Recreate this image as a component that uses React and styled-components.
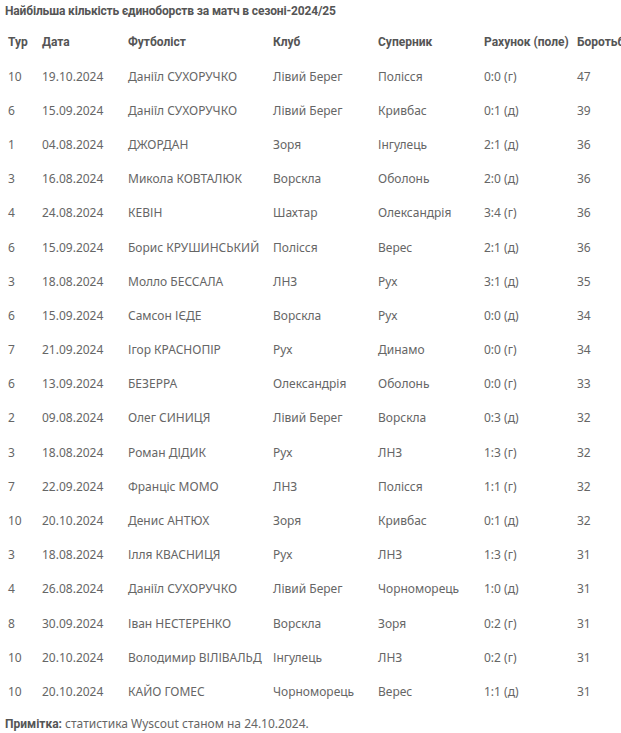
import React from 'react';
import styled, { createGlobalStyle } from 'styled-components';

const GlobalStyle = createGlobalStyle`
    body {
        margin: 0;
        background: #fff;
        overflow: hidden;
        font-family: "Noto Sans", "Open Sans", sans-serif;
    }
`;

const rows = [
    ['10', '19.10.2024', 'Даніїл СУХОРУЧКО', 'Лівий Берег', 'Полісся', '0:0 (г)', '47'],
    ['6', '15.09.2024', 'Даніїл СУХОРУЧКО', 'Лівий Берег', 'Кривбас', '0:1 (д)', '39'],
    ['1', '04.08.2024', 'ДЖОРДАН', 'Зоря', 'Інгулець', '2:1 (д)', '36'],
    ['3', '16.08.2024', 'Микола КОВТАЛЮК', 'Ворскла', 'Оболонь', '2:0 (д)', '36'],
    ['4', '24.08.2024', 'КЕВІН', 'Шахтар', 'Олександрія', '3:4 (г)', '36'],
    ['6', '15.09.2024', 'Борис КРУШИНСЬКИЙ', 'Полісся', 'Верес', '2:1 (д)', '36'],
    ['3', '18.08.2024', 'Молло БЕССАЛА', 'ЛНЗ', 'Рух', '3:1 (д)', '35'],
    ['6', '15.09.2024', 'Самсон ІЄДЕ', 'Ворскла', 'Рух', '0:0 (д)', '34'],
    ['7', '21.09.2024', 'Ігор КРАСНОПІР', 'Рух', 'Динамо', '0:0 (г)', '34'],
    ['6', '13.09.2024', 'БЕЗЕРРА', 'Олександрія', 'Оболонь', '0:0 (г)', '33'],
    ['2', '09.08.2024', 'Олег СИНИЦЯ', 'Лівий Берег', 'Ворскла', '0:3 (д)', '32'],
    ['3', '18.08.2024', 'Роман ДІДИК', 'Рух', 'ЛНЗ', '1:3 (г)', '32'],
    ['7', '22.09.2024', 'Франціс МОМО', 'ЛНЗ', 'Полісся', '1:1 (г)', '32'],
    ['10', '20.10.2024', 'Денис АНТЮХ', 'Зоря', 'Кривбас', '0:1 (д)', '32'],
    ['3', '18.08.2024', 'Ілля КВАСНИЦЯ', 'Рух', 'ЛНЗ', '1:3 (г)', '31'],
    ['4', '26.08.2024', 'Даніїл СУХОРУЧКО', 'Лівий Берег', 'Чорноморець', '1:0 (д)', '31'],
    ['8', '30.09.2024', 'Іван НЕСТЕРЕНКО', 'Ворскла', 'Зоря', '0:2 (г)', '31'],
    ['10', '20.10.2024', 'Володимир ВІЛІВАЛЬД', 'Інгулець', 'ЛНЗ', '0:2 (г)', '31'],
    ['10', '20.10.2024', 'КАЙО ГОМЕС', 'Чорноморець', 'Верес', '1:1 (д)', '31'],
];

const columns = [
    { title: 'Тур', width: 34 },
    { title: 'Дата', width: 86 },
    { title: 'Футболіст', width: 145 },
    { title: 'Клуб', width: 105 },
    { title: 'Суперник', width: 106 },
    { title: 'Рахунок (поле)', width: 93 },
    { title: 'Боротьба', width: 80 },
];

const App = () => (
    <Page>
        <GlobalStyle />
        <Title>Найбільша кількість єдиноборств за матч в сезоні-2024/25</Title>
        <StatsTable>
            <colgroup>
                {columns.map((c) => (
                    <col key={c.title} style={{ width: c.width }} />
                ))}
            </colgroup>
            <thead>
                <tr>
                    {columns.map((c) => (
                        <HeadCell key={c.title}>{c.title}</HeadCell>
                    ))}
                </tr>
            </thead>
            <tbody>
                {rows.map((r, i) => (
                    <tr key={i}>
                        {r.map((v, j) => (
                            <Cell key={j}>{v}</Cell>
                        ))}
                    </tr>
                ))}
            </tbody>
        </StatsTable>
        <Note>
            <strong>Примітка:</strong> статистика Wyscout станом на 24.10.2024.
        </Note>
    </Page>
);

// bold text in the original is a narrow face, Roboto Bold is closest
const boldFont = `"Roboto", "Noto Sans", sans-serif`;

const Page = styled.div`
    width: 700px;
    padding: 3px 5px;
    color: #666;
    font-size: 12px;
`;

const Title = styled.div`
    font-family: ${boldFont};
    font-weight: bold;
    font-size: 12px;
    letter-spacing: -0.15px;
    color: #555;
    line-height: 17px;
`;

const StatsTable = styled.table`
    margin-top: 5px;
    border-collapse: collapse;
    table-layout: fixed;
    width: 649px;
`;

const HeadCell = styled.th`
    height: 34px;
    padding: 0 0 0 3px;
    text-align: left;
    font-family: ${boldFont};
    font-size: 12px;
    font-weight: bold;
    color: #555;
    white-space: nowrap;
`;

const Cell = styled.td`
    height: 34.2px;
    padding: 0 0 0 3px;
    color: #666;
    white-space: nowrap;
`;

const Note = styled.div`
    margin-top: 6px;
    line-height: 17px;

    strong {
        font-family: ${boldFont};
        font-size: 12px;
        color: #555;
    }
`;

export default App;
